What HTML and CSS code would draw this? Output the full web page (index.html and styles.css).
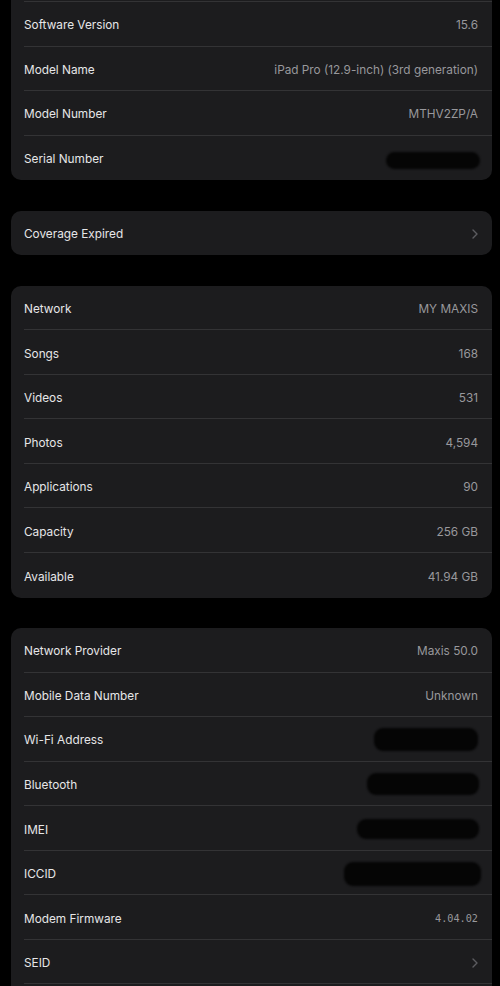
FILE: index.html
```html
<!DOCTYPE html>
<html lang="en">
<head>
  <meta charset="UTF-8" />
  <meta name="viewport" content="width=device-width, initial-scale=1.0"/>
  <title>About</title>
  <link rel="stylesheet" href="styles.css">
</head>
<body>
  <div class="page">
    <div class="card card-cut">
      <div class="topline"></div>
      <div class="row"><span class="label">Software Version</span><span class="value">15.6</span></div>
      <div class="row"><span class="label">Model Name</span><span class="value">iPad Pro (12.9-inch) (3rd generation)</span></div>
      <div class="row"><span class="label">Model Number</span><span class="value">MTHV2ZP/A</span></div>
      <div class="row"><span class="label">Serial Number</span><span class="blob blob-serial"></span></div>
    </div>

    <div class="card">
      <div class="row">
        <span class="label">Coverage Expired</span>
        <svg class="chevron" width="6" height="10" viewBox="0 0 6 10"><polyline points="1,1 5,5 1,9" /></svg>
      </div>
    </div>

    <div class="card">
      <div class="row"><span class="label">Network</span><span class="value">MY MAXIS</span></div>
      <div class="row"><span class="label">Songs</span><span class="value">168</span></div>
      <div class="row"><span class="label">Videos</span><span class="value">531</span></div>
      <div class="row"><span class="label">Photos</span><span class="value">4,594</span></div>
      <div class="row"><span class="label">Applications</span><span class="value">90</span></div>
      <div class="row"><span class="label">Capacity</span><span class="value">256 GB</span></div>
      <div class="row"><span class="label">Available</span><span class="value">41.94 GB</span></div>
    </div>

    <div class="card card-open">
      <div class="row"><span class="label">Network Provider</span><span class="value">Maxis 50.0</span></div>
      <div class="row"><span class="label">Mobile Data Number</span><span class="value">Unknown</span></div>
      <div class="row"><span class="label">Wi-Fi Address</span><span class="blob blob-wifi"></span></div>
      <div class="row"><span class="label">Bluetooth</span><span class="blob blob-bt"></span></div>
      <div class="row"><span class="label">IMEI</span><span class="blob blob-imei"></span></div>
      <div class="row"><span class="label">ICCID</span><span class="blob blob-iccid"></span></div>
      <div class="row"><span class="label">Modem Firmware</span><span class="value mono">4.04.02</span></div>
      <div class="row">
        <span class="label">SEID</span>
        <svg class="chevron" width="6" height="10" viewBox="0 0 6 10"><polyline points="1,1 5,5 1,9" /></svg>
      </div>
      <div class="row"></div>
    </div>
  </div>
</body>
</html>
```

FILE: styles.css
```css
body {
  margin: 0;
  background-color: #000;
  font-family: Inter, "Noto Sans", sans-serif;
  height: 986px;
  overflow: hidden;
}
.page {
  display: flex;
  flex-direction: column;
  gap: 30.5px;
  padding: 0 8px 0 11px;
}
.card {
  background-color: #1c1c1e;
  border-radius: 10px;
}
.card-cut {
  border-top-left-radius: 0;
  border-top-right-radius: 0;
}
.card-open {
  border-bottom-left-radius: 0;
  border-bottom-right-radius: 0;
}
.topline {
  height: 1px;
  margin: 0 0 0 13px;
  border-bottom: 1px solid #333335;
}
.row {
  display: flex;
  align-items: center;
  justify-content: space-between;
  height: 44.55px;
  box-sizing: border-box;
  margin-left: 13px;
  padding: 3px 14px 0 0;
  border-bottom: 1px solid #333335;
}
.row:last-child {
  border-bottom: none;
}
.label {
  font-size: 11.8px;
  color: #e6e6e8;
}
.value {
  font-size: 11.8px;
  color: #98989c;
}
.mono {
  font-family: "DejaVu Sans Mono", monospace;
  font-size: 10.2px;
}
.chevron {
  fill: none;
  stroke: #5c5c60;
  stroke-width: 1.4;
  stroke-linecap: round;
  stroke-linejoin: round;
}
.blob {
  display: inline-block;
  background-color: #050505;
  border-radius: 9px;
  filter: blur(1.2px);
}
.blob-serial { width: 94px; height: 17px; margin: 3px -2px 0 0; }
.blob-wifi { width: 104px; height: 23px; margin-top: -1px; }
.blob-bt { width: 112px; height: 22px; margin: -1px -1px 0 0; }
.blob-imei { width: 122px; height: 20px; margin: -1px -1px 0 0; }
.blob-iccid { width: 137px; height: 24px; margin: -1px -3px 0 0; }
```
